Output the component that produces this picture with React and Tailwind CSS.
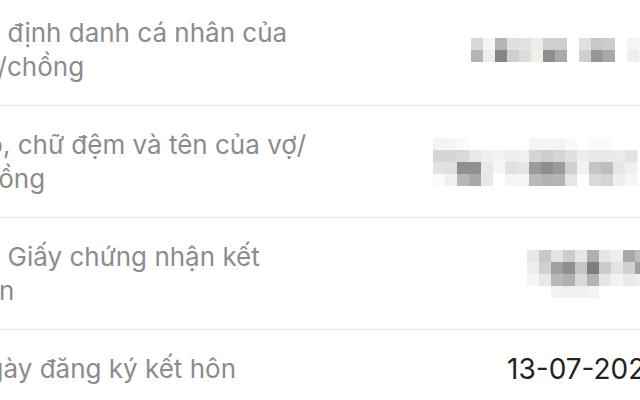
import React from 'react';

const font = { fontFamily: 'Inter, "Noto Sans", sans-serif' };

// pixelated (blurred) values, one string of grey hex per row of blocks
const mosaics = [
  {
    width: 192,
    rows: [
      ['d8d8d8', 'f5f5f5', 'b5b5b5', 'e0e0e0', 'e2e2e2', 'ececec', 'cfcfcf', 'cfcfcf', 'ffffff', 'e0e0e0', 'c8c8c8', 'cdcdcd', 'ffffff', 'f4f4f4'],
      ['b4b4b4', 'ededed', '858585', 'cfcfcf', 'dcdcdc', 'f2efe9', '8e8e8e', 'a9a9a9', 'ffffff', 'cfcfcf', '969696', 'a8a8a8', 'ffffff', 'eeeeee'],
    ],
  },
  {
    width: 230,
    rows: [
      ['f7f3f3', 'f7f3f3', 'fafafa', 'ffffff', 'ffffff', 'ffffff', 'ffffff', 'ffffff', 'f6f3f3', 'f6f3f3', 'f6f3f3', 'fafafa', 'ffffff', 'fafafa', 'fafafa', 'ffffff', 'ffffff'],
      ['d6d6d6', 'd6d6d6', 'd9d9d9', 'e8e8e8', 'f0f0f0', 'f3f3f3', 'eeeeee', 'f0f0f0', 'd5d5d5', 'cdcdcd', 'd5d5d5', 'e0e0e0', 'ededed', 'e9e9e9', 'e9e9e9', 'ebebeb', 'e4e4e4'],
      ['e3e3e3', 'e0e0e0', '8f8f8f', '909090', 'e8e8e8', 'f5f5f5', 'e0e0e0', 'e6e6e6', '9a9a9a', '8e8e8e', '9a9a9a', 'd0d0d0', 'f2f2f2', 'c4c4c4', 'bdbdbd', 'e6e6e6', 'f0f0f0'],
      ['fafafa', 'f0f0f0', 'b8b8b8', 'a9a9a9', 'e8e8e8', 'ffffff', 'f5f5f5', 'f5f5f5', 'b9b9b9', 'b3b3b3', 'b5b5b5', 'e6e6e6', 'ffffff', 'dadada', 'd4d4d4', 'eeeeee', 'f6f6f6'],
    ],
  },
  {
    width: 136,
    rows: [
      ['e8e8e8', 'c8c8c8', 'e4e4e4', 'cccccc', 'e6e6e6', 'b0b0b0', 'e6e6e6', 'eeeeee', 'a8a8a8', 'bdbdbd'],
      ['eeeeee', 'd0d0d0', 'a0a0a0', '8f8f8f', 'c6c6c6', '7e7e7e', 'cccccc', 'e4e4e4', 'd0d0d0', 'a0a0a0'],
      ['f6f6f6', 'e8e8e8', 'b8b8b8', 'b0b0b0', 'd8d8d8', 'b4b4b4', 'e6e6e6', 'f2f2f2', 'eaeaea', 'eeeeee'],
      ['ffffff', 'ffffff', 'f2f2f2', 'f0f0f0', 'f0f0f0', 'f3f3f3', 'ffffff', 'ffffff', 'ffffff', 'ffffff'],
    ],
  },
];

const Mosaic = ({ data }) => (
  <svg width={data.width} height={data.rows.length * 12} className="shrink-0">
    {data.rows.map((row, r) =>
      row.map((c, i) => (
        <rect key={r + '-' + i} x={i * 12} y={r * 12} width="12.5" height="12.5" fill={'#' + c} />
      ))
    )}
  </svg>
);

const Row = ({ label, children, last }) => (
  <div className={`flex items-center justify-between pt-[22px] pb-[21px] pr-[15px] ${last ? '' : 'border-b border-[#e4e4e4]'}`}>
    <div className="text-[26px] leading-[34px] text-[#8c8c8c] whitespace-nowrap">{label}</div>
    {children}
  </div>
);

export default function App() {
  return (
    <div className="w-[640px] h-[400px] overflow-hidden bg-white" style={font}>
      <div className="ml-[-32px] mt-[-6px] w-[710px]">
        <Row label={<>Số định danh cá nhân của<br />vợ/chồng</>}>
          <Mosaic data={mosaics[0]} />
        </Row>
        <Row label={<>Họ, chữ đệm và tên của vợ/<br />chồng</>}>
          <Mosaic data={mosaics[1]} />
        </Row>
        <Row label={<>Số Giấy chứng nhận kết<br />hôn</>}>
          <Mosaic data={mosaics[2]} />
        </Row>
        <Row label="Ngày đăng ký kết hôn" last>
          <div className="text-[28px] leading-[34px] text-[#222222]">13-07-2024</div>
        </Row>
      </div>
    </div>
  );
}
